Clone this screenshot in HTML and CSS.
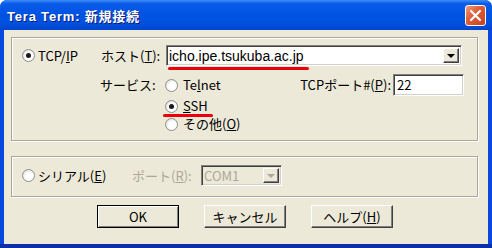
FILE: index.html
```html
<!DOCTYPE html>
<html lang="ja">
<head>
  <meta charset="UTF-8" />
  <title>Tera Term: 新規接続</title>
  <link rel="stylesheet" href="styles.css">
</head>
<body>
  <div class="window">
    <div class="titlebar">
      <span class="title">Tera Term: 新規接続</span>
      <span class="close">
        <svg width="13" height="13" viewBox="0 0 13 13">
          <path d="M2 2 L11 11 M11 2 L2 11" stroke="#fff" stroke-width="2.2" stroke-linecap="round"/>
        </svg>
      </span>
    </div>

    <div class="client">
      <!-- TCP/IP group -->
      <div class="group tcp">
        <div class="row host-row">
          <span class="radio checked"></span>
          <span class="lbl proto">TCP/<u>I</u>P</span>
          <span class="lbl host">ホスト(<u>T</u>):</span>
          <div class="combo host-combo">
            <span class="combo-text latin">icho.ipe.tsukuba.ac.jp</span>
            <span class="drop"><i></i></span>
          </div>
        </div>
        <div class="mark host-mark"></div>

        <div class="row service-row">
          <span class="lbl service">サービス:</span>
          <span class="radio"></span>
          <span class="lbl opt telnet">Te<u>l</u>net</span>
          <span class="lbl port">TCPポート#(<u>P</u>):</span>
          <div class="field port-field">22</div>
        </div>
        <div class="row sub-row">
          <span class="radio checked"></span>
          <span class="lbl opt"><u>S</u>SH</span>
        </div>
        <div class="mark ssh-mark"></div>
        <div class="row sub-row">
          <span class="radio"></span>
          <span class="lbl opt">その他(<u>O</u>)</span>
        </div>
      </div>

      <!-- serial group -->
      <div class="group serial">
        <div class="row serial-row">
          <span class="radio"></span>
          <span class="lbl proto">シリアル(<u>E</u>)</span>
          <span class="lbl disabled">ポート(<u>R</u>):</span>
          <div class="combo com-combo">
            <span class="combo-text">COM1</span>
            <span class="drop"><i></i></span>
          </div>
        </div>
      </div>

      <div class="buttons">
        <button class="btn default">OK</button>
        <button class="btn">キャンセル</button>
        <button class="btn">ヘルプ(<u>H</u>)</button>
      </div>
    </div>
  </div>
</body>
</html>
```

FILE: styles.css
```css
body {
  margin: 0;
  font-family: 'Noto Sans CJK JP', 'Liberation Sans', sans-serif;
  font-size: 13px;
  color: #000;
}

.window {
  width: 492px;
  height: 248px;
  background: #0a47dc;
  border-bottom: 4px solid #0a2fa8;
  box-sizing: border-box;
  display: flex;
  flex-direction: column;
  border-radius: 7px 7px 0 0;
  overflow: hidden;
}

.titlebar {
  height: 30px;
  flex: none;
  display: flex;
  align-items: center;
  justify-content: space-between;
  padding: 0 6px 0 7px;
  background: linear-gradient(#3d8cf5, #0a5be8 12%, #0054e3 45%, #0050dd 80%, #0044cc);
}

.title {
  font-family: 'Liberation Sans', 'Noto Sans CJK JP', sans-serif;
  font-weight: bold;
  font-size: 13px;
  color: #fff;
  text-shadow: 1px 1px 0 #0a1a7a;
  letter-spacing: 0.8px;
}

.close {
  width: 21px;
  height: 21px;
  box-sizing: border-box;
  border: 1px solid #fff;
  border-radius: 3px;
  background: linear-gradient(135deg, #f19a7a, #e0603c 40%, #c8401c);
  display: flex;
  align-items: center;
  justify-content: center;
}

.client {
  flex: 1;
  margin: 0 4px 0 4px;
  background: #ece9d8;
  padding: 7px 10px 0 7px;
}

.group {
  border: 1px solid #aca899;
  box-shadow: 1px 1px 0 #fff, inset 1px 1px 0 #fff;
  box-sizing: border-box;
  width: 467px;
}

.group.tcp {
  height: 104px;
  padding: 7px 0 0 10px;
}

.group.serial {
  height: 41px;
  margin-top: 15px;
  padding: 8px 0 0 10px;
}

.row {
  display: flex;
  align-items: center;
}

.radio {
  width: 11px;
  height: 11px;
  flex: none;
  border-radius: 50%;
  border: 1px solid #8e8f8f;
  background: radial-gradient(circle at 60% 60%, #fff 40%, #d4d0c8 100%);
  box-sizing: content-box;
  position: relative;
}

.radio.checked::after {
  content: "";
  position: absolute;
  left: 3px;
  top: 3px;
  width: 5px;
  height: 5px;
  border-radius: 50%;
  background: #1a1a1a;
}

.lbl {
  white-space: nowrap;
  line-height: 14px;
}

.proto {
  margin-left: 3px;
  width: 63px;
}

.host {
  width: 65px;
}

.combo {
  height: 21px;
  box-sizing: border-box;
  background: #fff;
  border-top: 1px solid #808080;
  border-left: 1px solid #808080;
  border-right: 1px solid #fff;
  border-bottom: 1px solid #fff;
  box-shadow: inset 1px 1px 0 #404040, inset -1px -1px 0 #d4d0c8;
  display: flex;
  align-items: center;
  justify-content: space-between;
  padding: 2px 2px 2px 2px;
}

.host-combo {
  width: 296px;
}

.combo-text {
  line-height: 14px;
}

.latin {
  font-family: 'Liberation Sans', sans-serif;
  font-size: 14px;
}

.drop {
  width: 16px;
  height: 15px;
  box-sizing: border-box;
  background: #ece9d8;
  border-top: 1px solid #fff;
  border-left: 1px solid #fff;
  border-right: 1px solid #404040;
  border-bottom: 1px solid #404040;
  box-shadow: inset -1px -1px 0 #808080;
  display: flex;
  align-items: center;
  justify-content: center;
}

.drop i {
  width: 0;
  height: 0;
  border-left: 4px solid transparent;
  border-right: 4px solid transparent;
  border-top: 4px solid #000;
}

.mark {
  height: 3px;
  background: #e8000b;
  border-radius: 2px;
}

.host-mark {
  width: 141px;
  margin: 1px 0 0 146px;
}

.service-row {
  margin-top: 4px;
  height: 22px;
}

.service {
  margin-left: 78px;
  width: 65px;
}

.opt {
  margin-left: 5px;
}

.telnet {
  width: 91px;
}

.port {
  width: 117px;
  text-align: right;
}

.field {
  width: 71px;
  height: 22px;
  box-sizing: border-box;
  margin-left: 2px;
  background: #fff;
  border-top: 1px solid #808080;
  border-left: 1px solid #808080;
  border-right: 1px solid #fff;
  border-bottom: 1px solid #fff;
  box-shadow: inset 1px 1px 0 #404040, inset -1px -1px 0 #d4d0c8;
  padding: 2px 3px;
  line-height: 16px;
}

.sub-row {
  height: 14px;
  margin-left: 143px;
}

.service-row + .sub-row {
  margin-top: 3px;
}

.ssh-mark {
  width: 50px;
  margin: 1px 0 0 141px;
}

.serial-row {
  height: 21px;
}

.disabled {
  color: #aca899;
  width: 69px;
  margin-left: 31px;
}

.com-combo {
  width: 81px;
  background: #ece9d8;
  color: #aca899;
}

.com-combo .drop i {
  border-top-color: #aca899;
}

.buttons {
  display: flex;
  gap: 25px;
  margin: 8px 0 0 86px;
}

.btn {
  width: 82px;
  height: 23px;
  font-family: 'Noto Sans CJK JP', 'Liberation Sans', sans-serif;
  font-size: 13px;
  line-height: 14px;
  padding: 0;
  background: #ece9d8;
  border-top: 1px solid #fff;
  border-left: 1px solid #fff;
  border-right: 1px solid #404040;
  border-bottom: 1px solid #404040;
  box-shadow: inset -1px -1px 0 #808080;
  color: #000;
}

.btn.default {
  border: 1px solid #000;
  box-shadow: inset 1px 1px 0 #fff, inset -1px -1px 0 #808080;
}
```
